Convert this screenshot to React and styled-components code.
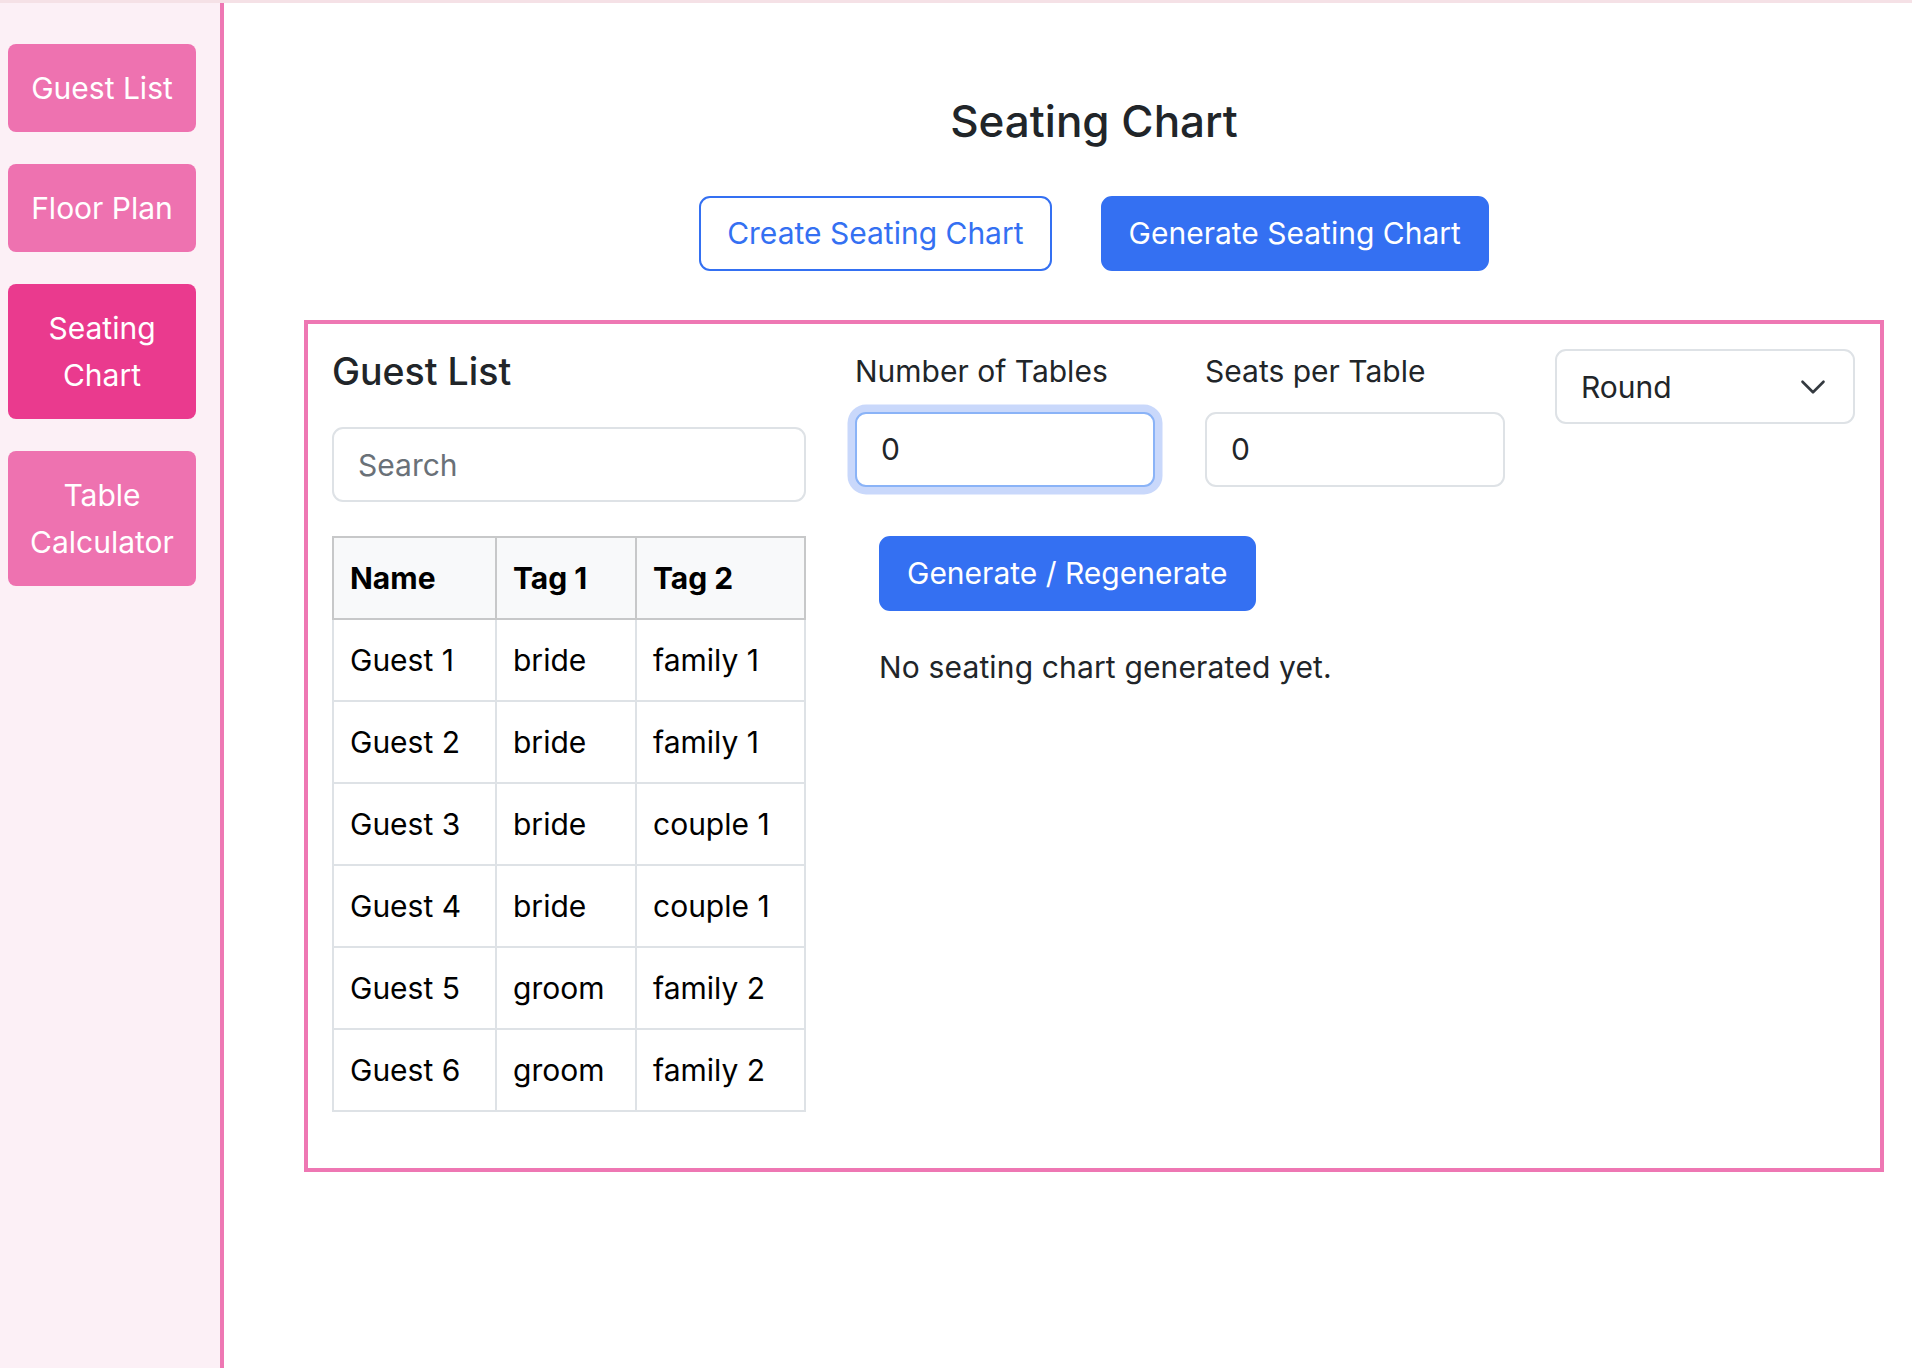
import React from 'react'
import styled, { createGlobalStyle } from 'styled-components'

const GlobalStyle = createGlobalStyle`
    * {
        box-sizing: border-box;
    }
    body {
        margin: 0;
        font-family: Inter, "Noto Sans", "Liberation Sans", sans-serif;
        color: #212529;
        background: #ffffff;
    }
`

const Page = styled.div`
    display: flex;
    min-height: 100vh;
    border-top: 3px solid #f5e1e6;
`

const Sidebar = styled.nav`
    width: 224px;
    flex-shrink: 0;
    background-color: #fcf0f6;
    border-right: 4px solid #ee77b3;
    padding: 41px 0 0 8px;
    display: flex;
    flex-direction: column;
    gap: 32px;
`

const NavButton = styled.button`
    width: 188px;
    border: none;
    border-radius: 8px;
    padding: 20.5px 12px;
    font-family: inherit;
    font-size: 30px;
    line-height: 47px;
    color: #ffffff;
    text-align: center;
    background-color: ${(p) => (p.$active ? '#ea3a8e' : '#ee72b0')};
    cursor: pointer;
`

const Main = styled.main`
    flex: 1;
    padding: 91px 28px 40px 80px;
`

const Title = styled.h1`
    margin: 0;
    text-align: center;
    font-size: 44px;
    line-height: 54px;
    font-weight: 500;
    color: #212529;
`

const ButtonRow = styled.div`
    display: flex;
    justify-content: center;
    gap: 49px;
    margin-top: 48px;
`

const Button = styled.button`
    font-family: inherit;
    font-size: 30px;
    line-height: 45px;
    padding: 13px 26px;
    border-radius: 11px;
    border: 2px solid #3470f2;
    background-color: ${(p) => (p.$outline ? '#ffffff' : '#3470f2')};
    color: ${(p) => (p.$outline ? '#3470f2' : '#ffffff')};
    cursor: pointer;
    white-space: nowrap;
`

const Panel = styled.section`
    margin-top: 49px;
    border: 4px solid #ee77b3;
    padding: 25px 25px 56px 24px;
    display: grid;
    grid-template-columns: 474px 1fr;
    column-gap: 49px;
    align-items: start;
`

const Column = styled.div`
    display: flex;
    flex-direction: column;
`

const SectionTitle = styled.h2`
    margin: 0;
    font-size: 37.5px;
    line-height: 45px;
    font-weight: 500;
    color: #212529;
`

const TextInput = styled.input`
    width: 100%;
    height: 75px;
    padding: 0 24px;
    font-family: inherit;
    font-size: 30px;
    color: #212529;
    background: #ffffff;
    border: 2px solid ${(p) => (p.$focused ? '#8ab3f7' : '#dee2e6')};
    border-radius: 11px;
    outline: none;
    box-shadow: ${(p) => (p.$focused ? '0 0 0 7.5px #c9d8fb' : 'none')};
    margin-top: ${(p) => p.$mt || 0}px;
    caret-color: #000000;

    &::placeholder {
        color: #6a7178;
    }
`

const Table = styled.table`
    width: 100%;
    margin-top: 34px;
    border-collapse: collapse;
    font-size: 30px;
    line-height: 45px;
    color: #000000;
`

const HeadCell = styled.th`
    text-align: left;
    font-weight: 700;
    padding: 17.5px 16px;
    background-color: #f8f9fa;
    border: 2px solid #c7c8c9;
    width: ${(p) => p.$w}px;
`

const Cell = styled.td`
    padding: 17.5px 16px;
    border: 2px solid #dee2e6;
`

const FieldsRow = styled.div`
    display: grid;
    grid-template-columns: repeat(3, 300px);
    column-gap: 50px;
    align-items: start;
`

const Field = styled.div`
    display: flex;
    flex-direction: column;
`

const Label = styled.label`
    font-size: 30px;
    line-height: 45px;
    margin-bottom: 17.5px;
    color: #212529;
`

const SelectWrap = styled.div`
    position: relative;
    height: 75px;
`

const Select = styled.select`
    appearance: none;
    width: 100%;
    height: 75px;
    padding: 0 70px 0 24px;
    font-family: inherit;
    font-size: 30px;
    color: #212529;
    background: #ffffff;
    border: 2px solid #dee2e6;
    border-radius: 11px;
    outline: none;
`

const Chevron = styled.svg`
    position: absolute;
    right: 28px;
    top: 50%;
    width: 28px;
    height: 28px;
    transform: translateY(-50%);
    pointer-events: none;
`

const Actions = styled.div`
    margin: 49px 0 0 24px;
    display: flex;
    flex-direction: column;
    align-items: flex-start;
`

const Note = styled.p`
    margin: 34px 0 0;
    font-size: 30px;
    line-height: 45px;
    letter-spacing: 0.15px;
    color: #212529;
`

const guests = [
    { name: 'Guest 1', tag1: 'bride', tag2: 'family 1' },
    { name: 'Guest 2', tag1: 'bride', tag2: 'family 1' },
    { name: 'Guest 3', tag1: 'bride', tag2: 'couple 1' },
    { name: 'Guest 4', tag1: 'bride', tag2: 'couple 1' },
    { name: 'Guest 5', tag1: 'groom', tag2: 'family 2' },
    { name: 'Guest 6', tag1: 'groom', tag2: 'family 2' },
]

const navItems = ['Guest List', 'Floor Plan', 'Seating Chart', 'Table Calculator']

const App = () => {
    return (
        <>
            <GlobalStyle />
            <Page>
                <Sidebar>
                    {navItems.map((item) => (
                        <NavButton key={item} $active={item === 'Seating Chart'}>
                            {item}
                        </NavButton>
                    ))}
                </Sidebar>
                <Main>
                    <Title>Seating Chart</Title>
                    <ButtonRow>
                        <Button $outline>Create Seating Chart</Button>
                        <Button>Generate Seating Chart</Button>
                    </ButtonRow>
                    <Panel>
                        <Column>
                            <SectionTitle>Guest List</SectionTitle>
                            <TextInput placeholder="Search" $mt={33} />
                            <Table>
                                <thead>
                                    <tr>
                                        <HeadCell $w={163}>Name</HeadCell>
                                        <HeadCell $w={140}>Tag 1</HeadCell>
                                        <HeadCell>Tag 2</HeadCell>
                                    </tr>
                                </thead>
                                <tbody>
                                    {guests.map((g) => (
                                        <tr key={g.name}>
                                            <Cell>{g.name}</Cell>
                                            <Cell>{g.tag1}</Cell>
                                            <Cell>{g.tag2}</Cell>
                                        </tr>
                                    ))}
                                </tbody>
                            </Table>
                        </Column>
                        <Column>
                            <FieldsRow>
                                <Field>
                                    <Label>Number of Tables</Label>
                                    <TextInput inputMode="numeric" defaultValue="0" $focused autoFocus />
                                </Field>
                                <Field>
                                    <Label>Seats per Table</Label>
                                    <TextInput inputMode="numeric" defaultValue="0" />
                                </Field>
                                <SelectWrap>
                                    <Select defaultValue="round">
                                        <option value="round">Round</option>
                                        <option value="rectangle">Rectangle</option>
                                    </Select>
                                    <Chevron viewBox="0 0 16 16" fill="none">
                                        <path d="m2 5 6 6 6-6" stroke="#343a40" strokeWidth="1.5" strokeLinecap="round" strokeLinejoin="round" />
                                    </Chevron>
                                </SelectWrap>
                            </FieldsRow>
                            <Actions>
                                <Button>Generate / Regenerate</Button>
                                <Note>No seating chart generated yet.</Note>
                            </Actions>
                        </Column>
                    </Panel>
                </Main>
            </Page>
        </>
    )
}

export default App
